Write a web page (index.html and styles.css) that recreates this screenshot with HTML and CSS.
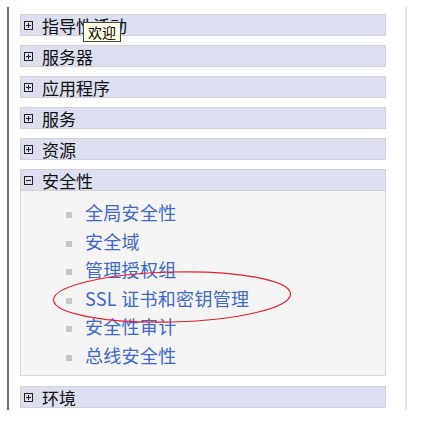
FILE: index.html
```html
<!DOCTYPE html>
<html>
<head>
  <title>Navigation</title>
  <link rel="stylesheet" href="styles.css">
</head>
<body>
  <div class="frame">
    <div class="sec">
      <div class="hd"><svg class="tog" width="9" height="9" viewBox="0 0 9 9"><rect x="0.5" y="0.5" width="8" height="8"/><path d="M2 4.5h5M4.5 2v5"/></svg>指导性活动</div>
    </div>
    <div class="sec">
      <div class="hd"><svg class="tog" width="9" height="9" viewBox="0 0 9 9"><rect x="0.5" y="0.5" width="8" height="8"/><path d="M2 4.5h5M4.5 2v5"/></svg>服务器</div>
    </div>
    <div class="sec">
      <div class="hd"><svg class="tog" width="9" height="9" viewBox="0 0 9 9"><rect x="0.5" y="0.5" width="8" height="8"/><path d="M2 4.5h5M4.5 2v5"/></svg>应用程序</div>
    </div>
    <div class="sec">
      <div class="hd"><svg class="tog" width="9" height="9" viewBox="0 0 9 9"><rect x="0.5" y="0.5" width="8" height="8"/><path d="M2 4.5h5M4.5 2v5"/></svg>服务</div>
    </div>
    <div class="sec">
      <div class="hd"><svg class="tog" width="9" height="9" viewBox="0 0 9 9"><rect x="0.5" y="0.5" width="8" height="8"/><path d="M2 4.5h5M4.5 2v5"/></svg>资源</div>
    </div>
    <div class="sec open">
      <div class="hd"><svg class="tog" width="9" height="9" viewBox="0 0 9 9"><rect x="0.5" y="0.5" width="8" height="8"/><path d="M2 4.5h5"/></svg>安全性</div>
      <ul class="items">
        <li><a href="#">全局安全性</a></li>
        <li><a href="#">安全域</a></li>
        <li><a href="#">管理授权组</a></li>
        <li><a href="#">SSL 证书和密钥管理</a></li>
        <li><a href="#">安全性审计</a></li>
        <li><a href="#">总线安全性</a></li>
      </ul>
    </div>
    <div class="sec">
      <div class="hd"><svg class="tog" width="9" height="9" viewBox="0 0 9 9"><rect x="0.5" y="0.5" width="8" height="8"/><path d="M2 4.5h5M4.5 2v5"/></svg>环境</div>
    </div>

    <div class="tip">欢迎</div>
    <svg class="mark" width="244" height="56" viewBox="0 0 244 56">
      <ellipse cx="122" cy="28" rx="118.5" ry="25" transform="rotate(-1.5 122 28)"/>
    </svg>
  </div>
</body>
</html>
```

FILE: styles.css
```css
body {
  margin: 0;
  background: #fff;
  font-family: "Noto Sans CJK SC", "Noto Sans", sans-serif;
}
.frame {
  position: relative;
  margin: 7px 0 0 7px;
  width: 366px;
  height: 396px;
  padding: 7px 19px 0 11px;
  border-left: 2px solid #6e6e6e;
  border-right: 2px solid #e2e2e2;
}
.sec {
  margin-bottom: 9px;
}
.sec.open {
  margin-bottom: 10px;
}
.hd {
  display: flex;
  align-items: center;
  height: 22px;
  box-sizing: border-box;
  padding-left: 3px;
  background: #dcdff0;
  border: 1px solid #cfd0d8;
  font-size: 17px;
  color: #111;
  white-space: nowrap;
}
.tog {
  margin-right: 9px;
  flex: none;
}
.tog rect, .tog path {
  fill: none;
  stroke: #222;
  stroke-width: 1;
}
.items {
  list-style: none;
  margin: 0;
  padding: 7px 0 6px;
  background: #f5f5f5;
  border: 1px solid #d6d6d6;
  border-top: none;
}
.items li {
  padding-left: 45px;
  line-height: 28.5px;
  font-size: 18px;
}
.items li::before {
  content: "";
  display: inline-block;
  width: 6px;
  height: 6px;
  background: #c6c6c6;
  margin-right: 13px;
  vertical-align: middle;
}
.items a {
  color: #3e68cc;
  text-decoration: none;
  letter-spacing: 0.3px;
}
.tip {
  position: absolute;
  left: 74px;
  top: 15px;
  width: 36px;
  height: 18px;
  line-height: 18px;
  text-align: center;
  font-size: 14px;
  color: #000;
  background: #ffffe1;
  border: 1px solid #444;
}
.mark {
  position: absolute;
  left: 41px;
  top: 262px;
}
.mark ellipse {
  fill: none;
  stroke: #e8202a;
  stroke-width: 1.2;
}
```
